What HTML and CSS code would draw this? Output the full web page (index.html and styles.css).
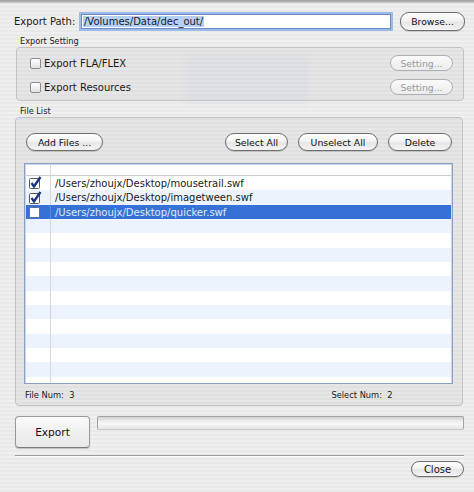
FILE: index.html
```html
<!DOCTYPE html>
<html>
<head>
<meta charset="utf-8">
<link rel="stylesheet" href="styles.css">
</head>
<body>
<div class="window">
  <div class="topedge"></div>
  <div class="pathrow">
    <span class="pathlabel">Export Path:</span>
    <div class="field"><span class="sel">/Volumes/Data/dec_out/</span></div>
    <div class="btn browse">Browse...</div>
  </div>

  <div class="seclabel">Export Setting</div>
  <div class="group settings">
    <div class="ghost"></div>
    <div class="setrow">
      <span class="cb"></span><span class="cblabel">Export FLA/FLEX</span>
      <div class="btn disabled setting">Setting...</div>
    </div>
    <div class="setrow">
      <span class="cb"></span><span class="cblabel">Export Resources</span>
      <div class="btn disabled setting">Setting...</div>
    </div>
  </div>

  <div class="seclabel">File List</div>
  <div class="group files">
    <div class="btnrow">
      <div class="btn addfiles">Add Files ...</div>
      <div class="spacer"></div>
      <div class="btn selall">Select All</div>
      <div class="btn unsel">Unselect All</div>
      <div class="btn del">Delete</div>
    </div>
    <div class="table">
      <div class="row head"><div class="c1"></div><div class="c2"></div></div>
      <div class="row"><div class="c1"><svg class="chk" viewBox="0 0 13 13" width="13" height="13"><rect x="0.5" y="2.5" width="10" height="10" rx="1" fill="#fff" stroke="#5a5a5a"/><path d="M2.5 7 L5 10.5 L11.5 1" fill="none" stroke="#1b3583" stroke-width="2.4"/></svg></div><div class="c2">/Users/zhoujx/Desktop/mousetrail.swf</div></div>
      <div class="row alt"><div class="c1"><svg class="chk" viewBox="0 0 13 13" width="13" height="13"><rect x="0.5" y="2.5" width="10" height="10" rx="1" fill="#fff" stroke="#5a5a5a"/><path d="M2.5 7 L5 10.5 L11.5 1" fill="none" stroke="#1b3583" stroke-width="2.4"/></svg></div><div class="c2">/Users/zhoujx/Desktop/imagetween.swf</div></div>
      <div class="row selected"><div class="c1"><svg class="chk" viewBox="0 0 13 13" width="13" height="13"><rect x="0.5" y="2.5" width="10" height="10" rx="1" fill="#fff" stroke="#5a6e96"/></svg></div><div class="c2">/Users/zhoujx/Desktop/quicker.swf</div></div>
      <div class="row alt"><div class="c1"></div><div class="c2"></div></div>
      <div class="row"><div class="c1"></div><div class="c2"></div></div>
      <div class="row alt"><div class="c1"></div><div class="c2"></div></div>
      <div class="row"><div class="c1"></div><div class="c2"></div></div>
      <div class="row alt"><div class="c1"></div><div class="c2"></div></div>
      <div class="row"><div class="c1"></div><div class="c2"></div></div>
      <div class="row alt"><div class="c1"></div><div class="c2"></div></div>
      <div class="row"><div class="c1"></div><div class="c2"></div></div>
      <div class="row alt"><div class="c1"></div><div class="c2"></div></div>
      <div class="row"><div class="c1"></div><div class="c2"></div></div>
      <div class="row alt"><div class="c1"></div><div class="c2"></div></div>
      <div class="row"><div class="c1"></div><div class="c2"></div></div>
    </div>
    <div class="footer">
      <span class="fnum">File Num:  3</span>
      <span class="snum">Select Num:  2</span>
    </div>
  </div>

  <div class="exportrow">
    <div class="exportbtn">Export</div>
    <div class="progress"></div>
  </div>
  <div class="separator"></div>
  <div class="closerow">
    <div class="btn close">Close</div>
  </div>
</div>
</body>
</html>
```

FILE: styles.css
```css
* { box-sizing: border-box; }
html, body { margin: 0; padding: 0; }
body {
  font-family: "DejaVu Sans", "Liberation Sans", sans-serif;
  font-size: 10px;
  color: #1a1a1a;
}
.window {
  width: 474px;
  height: 492px;
  overflow: hidden;
  display: flex;
  flex-direction: column;
  background: repeating-linear-gradient(to bottom, #efefef 0, #efefef 2px, #e9e9e9 2px, #e9e9e9 4px);
}
.topedge {
  height: 3px;
  background: linear-gradient(#9a9a9a, #cfcfcf);
}
.pathrow {
  display: flex;
  align-items: center;
  height: 19px;
  margin-top: 9px;
  padding-left: 14px;
}
.pathlabel {
  width: 67px;
  font-size: 10px;
}
.field {
  width: 310px;
  height: 15px;
  background: #fff;
  border: 1px solid #6d8cc0;
  box-shadow: 0 0 0 2px #9dbbe8;
  padding-left: 1px;
  line-height: 14px;
  font-size: 10px;
}
.sel {
  background: #b4d0f6;
  padding: 0 1px;
}
.btn {
  display: flex;
  align-items: center;
  justify-content: center;
  height: 18px;
  border: 1px solid #6e6e6e;
  border-radius: 9px;
  background: linear-gradient(#ffffff 0%, #f3f3f3 45%, #e6e6e6 55%, #f4f4f4 100%);
  box-shadow: 0 1px 1px rgba(0,0,0,0.15);
  font-size: 9.3px;
  color: #111;
  white-space: nowrap;
}
.browse {
  width: 65px;
  height: 19px;
  margin-left: 9px;
}
.seclabel {
  height: 12px;
  margin: 4px 0 0 20px;
  font-size: 8.2px;
  line-height: 12px;
  color: #222;
}
.group {
  position: relative;
  border: 1px solid #c2c2c2;
  border-radius: 4px;
  background: rgba(0,0,0,0.035);
}
.settings {
  height: 54px;
  margin: 0 10px 0 16px;
  padding: 5px 10px 0 13px;
  display: flex;
  flex-direction: column;
  gap: 4px;
}
.ghost {
  position: absolute;
  left: 168px;
  top: 7px;
  width: 124px;
  height: 50px;
  background: rgba(195, 208, 226, 0.22);
  filter: blur(3px);
}
.setrow {
  position: relative;
  height: 20px;
  display: flex;
  align-items: center;
}
.cb {
  width: 11px;
  height: 11px;
  border: 1px solid #8a8a8a;
  border-radius: 2px;
  background: linear-gradient(#ffffff, #e2e2e2);
  margin-right: 3px;
}
.cblabel {
  font-size: 10px;
}
.setting {
  margin-left: auto;
  width: 63px;
  height: 16px;
}
.btn.disabled {
  border-color: #b0b0b0;
  color: #9a9a9a;
  box-shadow: none;
  background: linear-gradient(#fafafa, #ececec);
}
.files {
  height: 289px;
  margin: 0 11px 0 15px;
  padding: 15px 10px 0 10px;
  display: flex;
  flex-direction: column;
}
.btnrow {
  display: flex;
  height: 18px;
  gap: 10px;
}
.spacer { flex: 1; }
.addfiles { width: 77px; }
.selall { width: 63px; }
.unsel { width: 80px; }
.del { width: 64px; }
.table {
  margin: 12px -1px 0 -2px;
  height: 221px;
  border: 1px solid #8aa1c4;
  box-shadow: inset 0 0 0 1px #c9d6ea;
  background: #fff;
  overflow: hidden;
  padding: 1px;
}
.row {
  display: flex;
  height: 14.35px;
  line-height: 15px;
  background: #fff;
}
.row.alt { background: #edf3fd; }
.row.selected { background: #3672d6; color: #dfe9f8; }
.row.head {
  height: 11px;
  background: #fdfdfd;
  border-bottom: 1px solid #cdcdcd;
}
.c1 {
  width: 25px;
  border-right: 1px solid #d6d6d6;
  display: flex;
  align-items: center;
  padding-left: 3px;
}
.row.selected .c1 { border-right-color: #5b8ce0; }
.c2 {
  flex: 1;
  padding-left: 4px;
  font-size: 10px;
  white-space: nowrap;
}
.chk { display: block; overflow: visible; margin-top: -1px; }
.footer {
  flex: 1;
  display: flex;
  align-items: center;
  font-size: 8.3px;
  white-space: pre;
  padding-top: 1px;
}
.fnum { margin-left: -1px; }
.snum { margin-left: 257px; }
.exportrow {
  display: flex;
  margin-top: 10px;
  padding-left: 15px;
  height: 32px;
}
.exportbtn {
  width: 75px;
  height: 32px;
  display: flex;
  align-items: center;
  justify-content: center;
  border: 1px solid #9a9a9a;
  border-bottom-color: #7a7a7a;
  border-radius: 4px;
  background: linear-gradient(#fbfbfb, #f0f0f0 50%, #e9e9e9);
  box-shadow: 0 1px 1px rgba(0,0,0,0.2);
  font-size: 10.6px;
  color: #111;
}
.progress {
  width: 367px;
  height: 14px;
  margin-left: 7px;
  border: 1px solid #a3a3a3;
  border-bottom-color: #c8c8c8;
  border-radius: 2px;
  background: linear-gradient(#cfcfcf, #eeeeee 35%, #f7f7f7 60%, #e4e4e4);
}
.separator {
  margin: 7px 10px 0 15px;
  height: 2px;
  border-top: 1px solid #9c9c9c;
  border-bottom: 1px solid #fbfbfb;
}
.closerow {
  display: flex;
  justify-content: flex-end;
  padding-right: 10px;
  margin-top: 4px;
}
.close {
  width: 53px;
  height: 16px;
  font-size: 10px;
}
```
